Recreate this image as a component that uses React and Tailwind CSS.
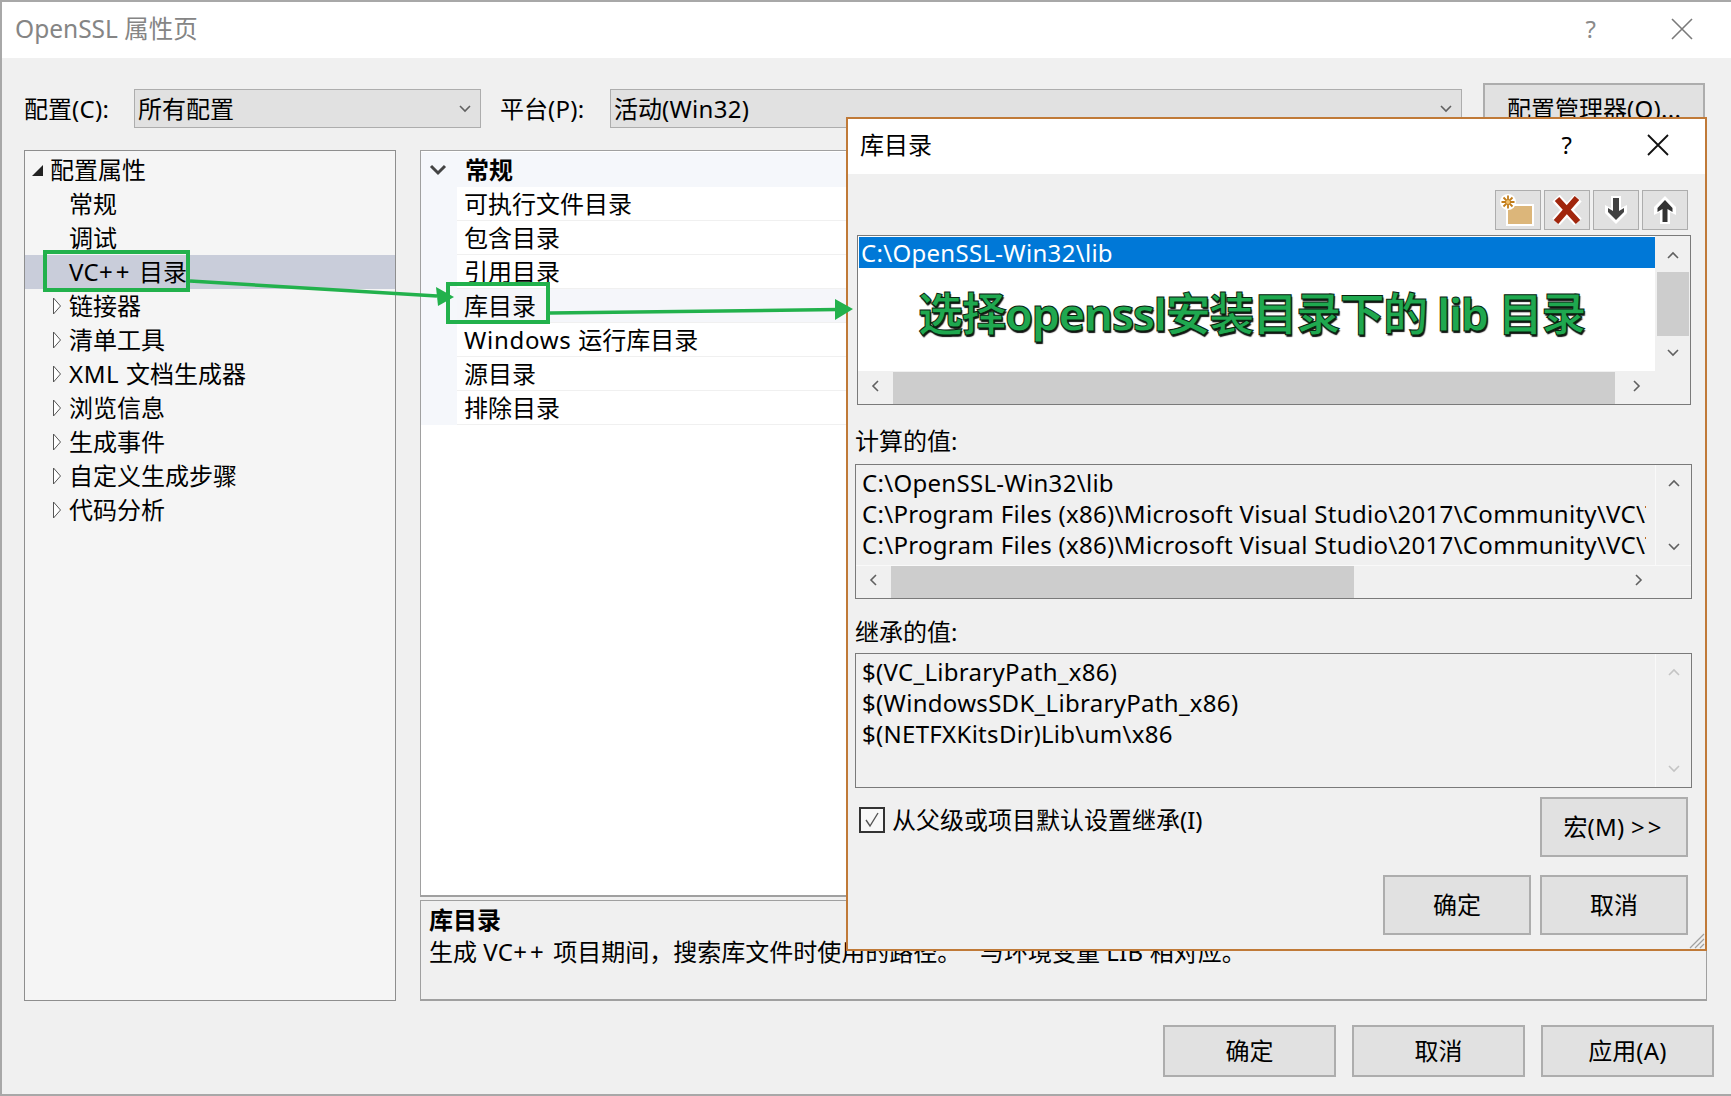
function Chevron({ dir = "down", className = "", color = "#606060" }) {
  const paths = {
    down: "M2 4 L7 9 L12 4",
    up: "M2 10 L7 5 L12 10",
    left: "M9 2 L4 7 L9 12",
    right: "M5 2 L10 7 L5 12",
  };
  return (
    <svg width="14" height="14" viewBox="0 0 14 14" fill="none" className={className}>
      <path d={paths[dir]} stroke={color} strokeWidth="1.6" />
    </svg>
  );
}

// latin runs sit a little wider than the font gives
function L({ children, className = "" }) {
  return <span className={`tracking-[0.3px] ${className}`}>{children}</span>;
}

function VCpp() {
  return (
    <L>
      VC<span className="tracking-[3px]">++</span>{" "}
    </L>
  );
}

function Closed() {
  return (
    <svg width="10" height="20" viewBox="0 0 10 20" className="shrink-0">
      <path d="M1.5 2 L8.5 10 L1.5 18 Z" fill="#fff" stroke="#555" strokeWidth="1" />
    </svg>
  );
}

function TreeRow({ label, level = 1, selected = false, arrow = null }) {
  return (
    <div className={`flex h-[34px] items-center ${selected ? "bg-[#c9cdda]" : ""}`}>
      <div className={`flex items-center ${level === 0 ? "w-[25px] justify-end pr-[6px]" : "w-[44px] justify-end pr-[7px]"}`}>
        {arrow === "open" && (
          <svg width="13" height="13" viewBox="0 0 13 13">
            <path d="M12 1 L12 12 L1 12 Z" fill="#222" />
          </svg>
        )}
        {arrow === "closed" && <Closed />}
      </div>
      <span className="whitespace-pre">{label}</span>
    </div>
  );
}

function PropRow({ label, active = false }) {
  return (
    <div className={`flex h-[34px] items-center whitespace-pre border-b border-[#f0f0f0] pl-[7px] ${active ? "bg-[#f5f6fa]" : "bg-white"}`}>
      {label}
    </div>
  );
}

function Btn({ children, className = "" }) {
  return (
    <div className={`flex items-center justify-center border-2 border-[#adadad] bg-[#e1e1e1] ${className}`}>
      {children}
    </div>
  );
}

function Select({ value, className = "" }) {
  return (
    <div className={`flex h-[39px] items-center justify-between border border-[#adadad] bg-[#e1e1e1] pl-[3px] pr-[8px] ${className}`}>
      <span>{value}</span>
      <Chevron dir="down" />
    </div>
  );
}

function ToolBtn({ children }) {
  return <div className="flex h-[40px] w-[46px] items-center justify-center border border-[#adadad] bg-[#e1e1e1]">{children}</div>;
}

function TextBox({ lines, disabled = false, hscroll = null, className = "" }) {
  const arrow = disabled ? "#c4c4c4" : "#606060";
  return (
    <div className={`flex h-[135px] flex-col border border-[#7a7a7a] bg-[#f0f0f0] ${className}`}>
      <div className="flex min-h-0 flex-1">
        <div className="min-w-0 flex-1 overflow-hidden border-r border-[#f9f9f9] pl-[6px] pr-[9px] pt-[2px]">
          {lines.map((l, i) => (
            <div key={i} className="h-[31px] overflow-hidden whitespace-nowrap leading-[31px] tracking-[0.3px]">{l}</div>
          ))}
        </div>
        <div className="flex w-[35px] flex-col items-center justify-between py-[11px]">
          <Chevron dir="up" color={arrow} />
          <Chevron dir="down" color={arrow} />
        </div>
      </div>
      {hscroll}
    </div>
  );
}

const treeItems = [
  "链接器",
  "清单工具",
  <><L className="tracking-[0.6px]">XML </L>文档生成器</>,
  "浏览信息",
  "生成事件",
  "自定义生成步骤",
  "代码分析",
];
const propItems = [
  "可执行文件目录",
  "包含目录",
  "引用目录",
  "库目录",
  <><L className="tracking-[0.7px]">Windows </L>运行库目录</>,
  "源目录",
  "排除目录",
];

export default function App() {
  return (
    <div className="relative flex h-[1096px] w-[1731px] flex-col overflow-hidden border-b-2 border-l-2 border-t-2 border-[#a8a8a8] bg-[#f0f0f0] font-['Noto_Sans','Noto_Sans_CJK_SC',sans-serif] text-[24px] leading-[34px] text-black">
      {/* title bar */}
      <div className="flex h-[56px] shrink-0 items-center justify-between bg-white pb-[2px] pl-[13px] pr-[38px] text-[#858585]">
        <span className="text-[24.5px]">OpenSSL 属性页</span>
        <div className="flex items-center gap-[75px]">
          <span className="text-[#8a8a8a]">?</span>
          <svg width="22" height="22" viewBox="0 0 22 22"><path d="M1 1 L21 21 M21 1 L1 21" stroke="#7a7a7a" strokeWidth="1.6" /></svg>
        </div>
      </div>

      {/* config row */}
      <div className="mt-[31px] flex h-[39px] shrink-0 items-center pl-[22px]">
        <span className="w-[110px]">配置<L>(C):</L></span>
        <Select value="所有配置" className="w-[347px]" />
        <span className="ml-[19px] w-[110px]">平台<L>(P):</L></span>
        <Select value={<>活动<L>(Win32)</L></>} className="w-[852px]" />
        <div className="ml-[21px] flex h-[51px] w-[222px] shrink-0 items-center border-2 border-[#adadad] bg-[#e1e1e1] pl-[22px]">配置管理器<L>(O)...</L></div>
      </div>

      {/* panels */}
      <div className="mt-[22px] flex h-[851px] shrink-0 gap-[24px] pl-[22px]">
        <div className="w-[372px] border border-[#8e8e8e] bg-[#f5f5f5] pt-[2px]">
          <TreeRow label="配置属性" level={0} arrow="open" />
          <TreeRow label="常规" />
          <TreeRow label="调试" />
          <TreeRow label={<><VCpp />目录</>} selected />
          {treeItems.map((t, i) => <TreeRow key={i} label={t} arrow="closed" />)}
        </div>
        <div className="flex w-[1287px] flex-col">
          <div className="h-[748px] border border-b-2 border-[#a0a0a0] bg-white pt-[1px]">
            <div className="flex h-[35px] items-center bg-[#f5f7fb] pl-[8px] font-bold">
              <svg width="18" height="12" viewBox="0 0 18 12"><path d="M2 2 L9 9 L16 2" fill="none" stroke="#444" strokeWidth="3" /></svg>
              <span className="ml-[18px]">常规</span>
            </div>
            <div className="flex">
              <div className="w-[36px] bg-[#f5f7fb]" />
              <div className="flex-1">
                {propItems.map((p, i) => <PropRow key={i} label={p} active={i === 3} />)}
              </div>
            </div>
          </div>
          <div className="mt-[3px] h-[101px] whitespace-pre border border-b-2 border-[#a0a0a0] pl-[8px] pt-[2px]">
            <div className="h-[32px] font-bold">库目录</div>
            <div>生成 <VCpp />项目期间，搜索库文件时使用的路径。   与环境变量 <L>LIB</L> 相对应。</div>
          </div>
        </div>
      </div>

      {/* footer */}
      <div className="mt-[24px] flex justify-end gap-[16px] pr-[17px]">
        <Btn className="h-[52px] w-[173px]">确定</Btn>
        <Btn className="h-[52px] w-[173px]">取消</Btn>
        <Btn className="h-[52px] w-[173px]"><span>应用<L>(A)</L></span></Btn>
      </div>

      {/* library directories dialog, sits over the window */}
      <div className="absolute left-[844px] top-[115px] flex h-[834px] w-[861px] flex-col border-2 border-[#c07a38] bg-[#f0f0f0]">
        <div className="flex h-[55px] shrink-0 items-center justify-between bg-white pb-[4px] pl-[12px] pr-[36px]">
          <span>库目录</span>
          <div className="flex items-center gap-[75px]">
            <span>?</span>
            <svg width="22" height="22" viewBox="0 0 22 22"><path d="M1 1 L21 21 M21 1 L1 21" stroke="#111" strokeWidth="1.8" /></svg>
          </div>
        </div>

        <div className="mt-[16px] flex justify-end gap-[3px] pr-[17px]">
          <ToolBtn>
            <svg width="36" height="32" viewBox="0 0 36 32">
              <path d="M6 12 h6 v-2 h22 v22 H6 Z" fill="#fff" />
              <path d="M8 14 h4 v-2 h20 v18 H8 Z" fill="#dcb67a" />
              <circle cx="8" cy="8" r="8" fill="#fff" />
              <path d="M8 1.5 V14.5 M1.5 8 H14.5 M3.5 3.5 L12.5 12.5 M12.5 3.5 L3.5 12.5" stroke="#c27d1a" strokeWidth="1.8" />
              <circle cx="8" cy="8" r="2" fill="#f0c070" />
            </svg>
          </ToolBtn>
          <ToolBtn>
            <svg width="32" height="30" viewBox="0 0 32 30">
              <path d="M5 3 L27 27 M27 3 L5 27" stroke="#fff" strokeWidth="10" />
              <path d="M6 4 L27 27 M26 3 L5 27" stroke="#a1260d" strokeWidth="6" />
            </svg>
          </ToolBtn>
          <ToolBtn>
            <svg width="24" height="30" viewBox="0 0 24 30">
              <path d="M7 1 h10 v12 l6 -3 v8 L12 29 L1 18 v-8 l6 3 Z" fill="#fff" />
              <path d="M9 3 h6 v13 l5 -3 v4 L12 25 L4 17 v-4 l5 3 Z" fill="#424242" />
            </svg>
          </ToolBtn>
          <ToolBtn>
            <svg width="24" height="30" viewBox="0 0 24 30">
              <path d="M7 29 h10 V17 l6 3 v-8 L12 1 L1 12 v8 l6 -3 Z" fill="#fff" />
              <path d="M9.5 27 h5 V14 l5 3 v-4 L12 5 L4.5 13 v4 l5 -3 Z" fill="#333" />
            </svg>
          </ToolBtn>
        </div>

        {/* editable list */}
        <div className="relative ml-[9px] mt-[5px] flex h-[170px] w-[834px] flex-col border border-[#7a7a7a] bg-[#f0f0f0]">
          <div className="flex min-h-0 flex-1">
            <div className="flex-1 bg-white pl-[1px] pt-[1px]">
              <div className="h-[31px] bg-[#0078d7] pl-[2px] leading-[31px] tracking-[0.3px] text-white">C:\OpenSSL-Win32\lib</div>
            </div>
            <div className="flex w-[35px] flex-col items-center pt-[12px]">
              <Chevron dir="up" />
              <div className="mt-[10px] h-[64px] w-[32px] bg-[#cdcdcd]" />
              <Chevron dir="down" className="mt-[10px]" />
            </div>
          </div>
          <div className="flex h-[33px] items-center">
            <div className="flex w-[35px] -translate-y-[2px] justify-center"><Chevron dir="left" /></div>
            <div className="h-[32px] w-[722px] bg-[#cdcdcd]" />
            <div className="flex w-[41px] -translate-y-[2px] justify-center"><Chevron dir="right" /></div>
          </div>
          <div className="absolute left-[60px] top-[48px] whitespace-nowrap text-[45px] font-bold leading-[60px] tracking-[-1.5px] text-[#1fa84f] [-webkit-text-stroke:1px_#08250f] [text-shadow:1px_2px_1px_#111]">
            选择openssl安装目录下的 lib 目录
          </div>
        </div>

        <div className="ml-[7px] mt-[19px]">计算的值:</div>
        <TextBox
          className="ml-[7px] mt-[6px] w-[837px]"
          lines={["C:\\OpenSSL-Win32\\lib", "C:\\Program Files (x86)\\Microsoft Visual Studio\\2017\\Community\\VC\\Tools", "C:\\Program Files (x86)\\Microsoft Visual Studio\\2017\\Community\\VC\\Tools"]}
          hscroll={
            <div className="flex h-[33px] shrink-0 items-center border-t border-[#f9f9f9]">
              <div className="flex w-[35px] -translate-y-[2px] justify-center"><Chevron dir="left" /></div>
              <div className="h-[32px] w-[463px] bg-[#cdcdcd]" />
              <div className="ml-auto flex w-[106px] -translate-y-[2px] justify-center"><Chevron dir="right" /></div>
            </div>
          }
        />

        <div className="ml-[7px] mt-[16px]">继承的值:</div>
        <TextBox
          disabled
          className="ml-[7px] mt-[4px] w-[837px]"
          lines={["$(VC_LibraryPath_x86)", "$(WindowsSDK_LibraryPath_x86)", "$(NETFXKitsDir)Lib\\um\\x86"]}
        />

        <div className="ml-[11px] mt-[9px] flex items-start justify-between pr-[17px]">
          <div className="mt-[6px] flex items-center gap-[7px]">
            <div className="flex h-[26px] w-[26px] items-center justify-center border-2 border-[#333] bg-[#f8f8f8]">
              <svg width="18" height="18" viewBox="0 0 18 18"><path d="M3 9 L7 15 L15 2" fill="none" stroke="#555" strokeWidth="1.4" /></svg>
            </div>
            <span>从父级或项目默认设置继承(I)</span>
          </div>
          <Btn className="h-[60px] w-[148px]"><span>宏<L>(M) </L><span className="tracking-[3px]">&gt;&gt;</span></span></Btn>
        </div>

        <div className="mt-[18px] flex justify-end gap-[9px] pr-[17px]">
          <Btn className="h-[60px] w-[148px]">确定</Btn>
          <Btn className="h-[60px] w-[148px]">取消</Btn>
        </div>

        <svg width="18" height="18" viewBox="0 0 18 18" className="absolute bottom-0 right-0">
          <path d="M17 3 L3 17 M17 8 L8 17 M17 13 L13 17" stroke="#a0a0a0" strokeWidth="1.2" />
        </svg>
      </div>

      {/* green annotations drawn on top of the shot */}
      <div className="absolute left-[41px] top-[248px] h-[42px] w-[147px] border-4 border-[#22b14c]" />
      <div className="absolute left-[444px] top-[280px] h-[42px] w-[104px] border-4 border-[#22b14c]" />
      <svg width="1731" height="1096" viewBox="0 0 1731 1096" className="pointer-events-none absolute -left-[2px] -top-[2px]">
        <path d="M190 281 L437 296" stroke="#22b14c" strokeWidth="3.5" fill="none" />
        <path d="M454 297 L436 287 L438 306 Z" fill="#22b14c" />
        <path d="M550 313 L838 309.5" stroke="#22b14c" strokeWidth="3.5" fill="none" />
        <path d="M853 309 L835 299 L835 320 Z" fill="#22b14c" />
      </svg>
    </div>
  );
}
